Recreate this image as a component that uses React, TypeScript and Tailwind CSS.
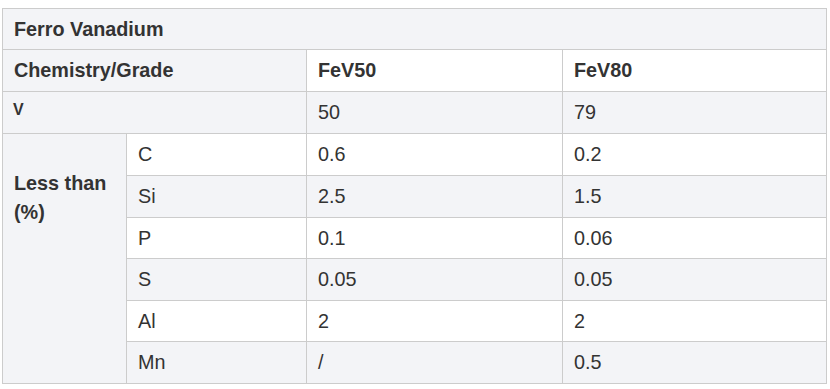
import React from "react";

const G = "bg-[#f3f4f7]";
const W = "bg-white";

function Cell({
  children,
  className = "",
}: {
  children?: React.ReactNode;
  className?: string;
}) {
  return (
    <div className={`flex items-center pl-[11px] leading-[29px] ${className}`}>
      {children}
    </div>
  );
}

const rows: { el: string; a: string; b: string; gray: boolean }[] = [
  { el: "C", a: "0.6", b: "0.2", gray: false },
  { el: "Si", a: "2.5", b: "1.5", gray: true },
  { el: "P", a: "0.1", b: "0.06", gray: false },
  { el: "S", a: "0.05", b: "0.05", gray: true },
  { el: "Al", a: "2", b: "2", gray: false },
  { el: "Mn", a: "/", b: "0.5", gray: true },
];

export default function App() {
  return (
    <div
      className="bg-white w-[830px] h-[389px] pt-[8px] pl-[2px] text-[#333] text-[19.8px]"
      style={{ fontFamily: '"Liberation Sans", Arial, sans-serif' }}
    >
      <div className="w-[825px] bg-[#cccccc] p-px">
        <div className="grid grid-cols-[123px_179px_255px_263px] grid-rows-[40px_41px_41px_41px_41px_40px_41px_40px_41px] gap-px">
          <Cell className={`col-span-4 font-bold ${G}`}>Ferro Vanadium</Cell>

          <Cell className={`col-span-2 font-bold ${G}`}>Chemistry/Grade</Cell>
          <Cell className={`font-bold ${W}`}>FeV50</Cell>
          <Cell className={`font-bold ${W}`}>FeV80</Cell>

          <div className={`col-span-2 ${G} pl-[10px] pt-[3px] text-[16px] font-bold leading-[29px]`}>
            V
          </div>
          <Cell className={G}>50</Cell>
          <Cell className={G}>79</Cell>

          <div
            className={`${G} pl-[11px] pt-[35px] font-bold leading-[29px]`}
            style={{ gridRow: "4 / span 6", gridColumn: "1" }}
          >
            Less than
            <br />
            (%)
          </div>
          {rows.map((r) => (
            <React.Fragment key={r.el}>
              <Cell className={r.gray ? G : W}>{r.el}</Cell>
              <Cell className={r.gray ? G : W}>{r.a}</Cell>
              <Cell className={r.gray ? G : W}>{r.b}</Cell>
            </React.Fragment>
          ))}
        </div>
      </div>
    </div>
  );
}
